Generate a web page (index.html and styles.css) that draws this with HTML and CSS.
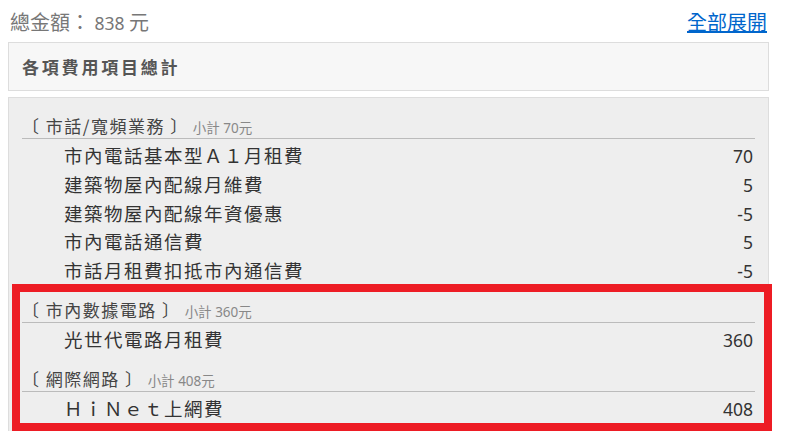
FILE: index.html
```html
<!DOCTYPE html>
<html lang="zh-Hant">
<head>
<meta charset="utf-8">
<link rel="stylesheet" href="styles.css">
</head>
<body>
<div class="wrap">
  <div class="top">
    <div class="total">總金額： <span class="num">838</span> 元</div>
    <a class="expand" href="#">全部展開</a>
  </div>
  <div class="panel-title">各項費用項目總計</div>
  <div class="panel-body">
    <div class="group">
      <div class="ghead"><span class="gname">〔 市話/寬頻業務 〕</span><span class="sub">小計 70元</span></div>
      <div class="row"><span class="item">市內電話基本型Ａ１月租費</span><span class="amt">70</span></div>
      <div class="row"><span class="item">建築物屋內配線月維費</span><span class="amt">5</span></div>
      <div class="row"><span class="item">建築物屋內配線年資優惠</span><span class="amt">-5</span></div>
      <div class="row"><span class="item">市內電話通信費</span><span class="amt">5</span></div>
      <div class="row"><span class="item">市話月租費扣抵市內通信費</span><span class="amt">-5</span></div>
    </div>
    <div class="group">
      <div class="ghead"><span class="gname">〔 市內數據電路 〕</span><span class="sub">小計 360元</span></div>
      <div class="row"><span class="item">光世代電路月租費</span><span class="amt">360</span></div>
    </div>
    <div class="group">
      <div class="ghead"><span class="gname">〔 網際網路 〕</span><span class="sub">小計 408元</span></div>
      <div class="row"><span class="item">ＨｉＮｅｔ上網費</span><span class="amt">408</span></div>
    </div>
  </div>
  <div class="highlight"></div>
</div>
</body>
</html>
```
FILE: styles.css
```css
html, body {
  margin: 0;
  padding: 0;
  background: #fff;
  overflow: hidden;
}
body {
  font-family: "Noto Sans", "Noto Sans CJK TC", sans-serif;
  color: #333;
}
.wrap {
  position: relative;
  width: 761px;
  margin-left: 8px;
}
.top {
  display: flex;
  justify-content: space-between;
  align-items: center;
  padding: 8px 2px 0 2px;
  height: 28px;
  margin-bottom: 6px;
}
.total {
  font-family: "Noto Sans CJK TC", sans-serif;
  font-size: 20px;
  line-height: 28px;
  color: #777;
}
.total .num {
  font-family: "Noto Sans", sans-serif;
  font-size: 17.5px;
}
.expand {
  font-family: "Noto Sans CJK TC", sans-serif;
  font-size: 20px;
  line-height: 28px;
  color: #0066cc;
  text-decoration: underline;
}
.panel-title {
  height: 47px;
  line-height: 47px;
  background: #f7f7f7;
  border: 1px solid #ddd;
  padding-left: 13px;
  font-family: "Noto Sans CJK TC", sans-serif;
  font-weight: bold;
  font-size: 17px;
  letter-spacing: 2.8px;
  color: #555;
  margin-bottom: 6px;
}
.panel-body {
  background: #eee;
  border: 1px solid #ddd;
  padding: 16px 13px 20px 13px;
}
.group + .group {
  margin-top: 13px;
}
.ghead {
  height: 24px;
  line-height: 24px;
  border-bottom: 1px solid #bbb;
  margin-bottom: 2px;
  display: flex;
  align-items: baseline;
}
.gname {
  font-family: "Noto Sans CJK TC", sans-serif;
  font-size: 17px;
  letter-spacing: 1.5px;
  color: #444;
}
.sub {
  font-family: "Noto Sans", "Noto Sans CJK TC", sans-serif;
  font-size: 13.5px;
  color: #888;
  margin-left: 4px;
}
.row {
  display: flex;
  justify-content: space-between;
  align-items: baseline;
  height: 28.8px;
  line-height: 28.8px;
  padding: 0 2px 0 42px;
}
.item {
  font-family: "Noto Sans CJK TC", sans-serif;
  font-size: 18.5px;
  letter-spacing: 1.5px;
  color: #333;
}
.amt {
  font-family: "Noto Sans", sans-serif;
  font-size: 17.5px;
  color: #333;
}
.highlight {
  position: absolute;
  left: 4px;
  top: 284px;
  width: 744px;
  height: 131px;
  border: 8px solid #ed1c24;
}
```
